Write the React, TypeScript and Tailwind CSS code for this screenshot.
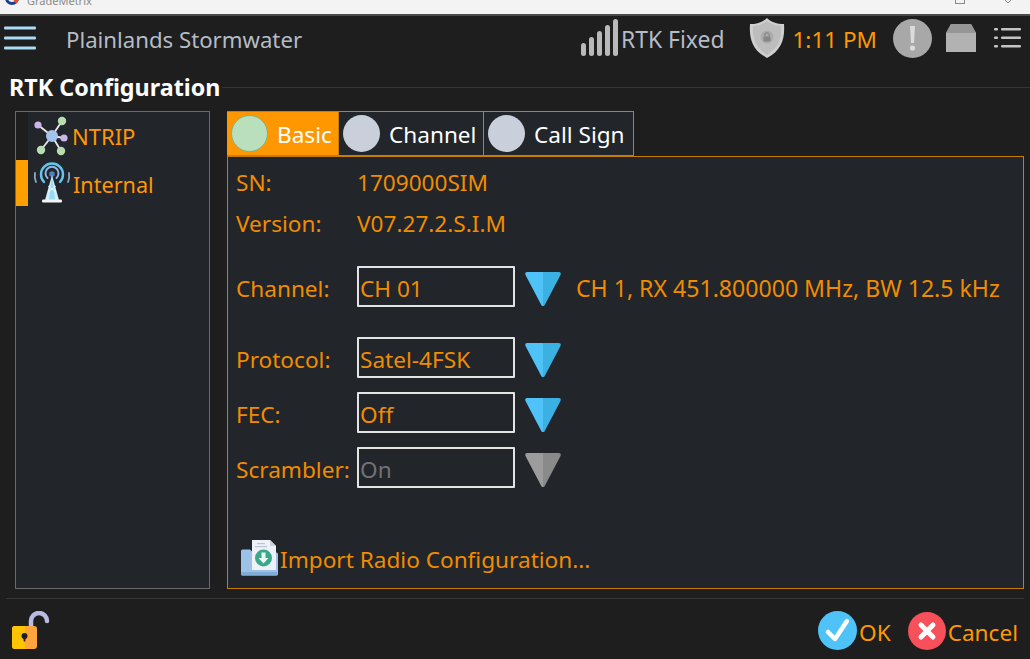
import { ReactNode } from 'react'

const FONT = "font-['Noto_Sans','Open_Sans',sans-serif]"

function MenuIcon() {
  return (
    <svg width="34" height="24" viewBox="0 0 34 24" className="shrink-0">
      <g fill="#a9dcf5">
        <rect x="1" y="0.5" width="32" height="3" rx="1" />
        <rect x="1" y="10.5" width="32" height="3" rx="1" />
        <rect x="1" y="20.5" width="32" height="3" rx="1" />
      </g>
    </svg>
  )
}

function SignalBars() {
  return (
    <svg width="38" height="38" viewBox="0 0 38 38" className="shrink-0">
      <g fill="#b9b9b9">
        <rect x="0" y="24" width="5" height="13" rx="2.5" />
        <rect x="8" y="18" width="5" height="19" rx="2.5" />
        <rect x="16" y="12" width="5" height="25" rx="2.5" />
        <rect x="24" y="6" width="5" height="31" rx="2.5" />
        <rect x="32" y="0" width="5" height="37" rx="2.5" />
      </g>
    </svg>
  )
}

function Shield() {
  return (
    <svg width="36" height="40" viewBox="0 0 36 40" className="shrink-0">
      <path d="M18 0 C22 4 28 6 35 6 C36 20 33 32 18 40 C3 32 0 20 1 6 C8 6 14 4 18 0Z" fill="#cfcfcf" />
      <path d="M18 3 C22 6 27 8 32 8 C33 20 30 30 18 37 C7 30 3 20 4 8 C9 8 14 6 18 3Z" fill="#bdbdbd" />
      <circle cx="18" cy="19" r="6.5" fill="#ababab" />
      <rect x="14.5" y="18.5" width="7" height="5" rx="1" fill="#858585" />
      <path d="M15.8 18.5v-1.500a2.200 2.200 0 0 1 4.400 0v1.500" fill="none" stroke="#858585" strokeWidth="1.100" />
    </svg>
  )
}

function AlertBadge() {
  return (
    <svg width="39" height="39" viewBox="0 0 39 39" className="shrink-0">
      <circle cx="19.5" cy="19.5" r="19.5" fill="#a8a8a8" />
      <path d="M17 7h5l-1 17h-3Z" fill="#dcdcdc" />
      <circle cx="19.5" cy="29" r="2.6" fill="#dcdcdc" />
    </svg>
  )
}

function BoxIcon() {
  return (
    <svg width="30" height="28" viewBox="0 0 30 28" className="shrink-0">
      <path d="M5 0H25L30 9V28H0V9Z" fill="#b2b2b2" />
      <path d="M5 0H25L30 9H0Z" fill="#969696" />
    </svg>
  )
}

function ListIcon() {
  return (
    <svg width="28" height="22" viewBox="0 0 28 22" className="shrink-0">
      <g fill="#c4c4c4">
        <rect x="0" y="1" width="4" height="2.5" rx="1" />
        <rect x="0" y="9.5" width="4" height="2.5" rx="1" />
        <rect x="0" y="18" width="4" height="2.5" rx="1" />
        <rect x="7" y="1" width="20" height="2.5" rx="1" />
        <rect x="7" y="9.5" width="20" height="2.5" rx="1" />
        <rect x="7" y="18" width="20" height="2.5" rx="1" />
      </g>
    </svg>
  )
}

function NetworkIcon() {
  return (
    <svg width="36" height="40" viewBox="0 0 36 40" className="shrink-0">
      <g stroke="#e8e8e8" strokeWidth="1.8">
        <line x1="19" y1="20" x2="5" y2="9" />
        <line x1="19" y1="20" x2="29" y2="5" />
        <line x1="19" y1="20" x2="31" y2="22" />
        <line x1="19" y1="20" x2="8" y2="34" />
        <line x1="19" y1="20" x2="28" y2="35" />
      </g>
      <circle cx="19" cy="20" r="6" fill="#a4c4ee" />
      <circle cx="5" cy="9" r="3.600" fill="#cdb4e6" />
      <circle cx="29" cy="5" r="4.200" fill="#b6dcb0" />
      <circle cx="31" cy="22" r="3.600" fill="#cdb4e6" />
      <circle cx="8" cy="34" r="4.200" fill="#b6dcb0" />
      <circle cx="28" cy="35" r="4.200" fill="#b6dcb0" />
    </svg>
  )
}

function TowerIcon() {
  return (
    <svg width="42" height="42" viewBox="0 0 42 42" className="shrink-0">
      <g fill="none" strokeLinecap="round">
        <path d="M13 20a11 11 0 1 1 16 0" stroke="#62c6ee" strokeWidth="2.400" />
        <path d="M16.500 16a6.500 6.500 0 1 1 9 0" stroke="#8fb6e6" strokeWidth="2" />
        <path d="M5 20a16 16 0 0 1 -1 -9M37 20a16 16 0 0 0 1 -9" stroke="#8fa8c8" strokeWidth="1.800" />
      </g>
      <circle cx="21" cy="12" r="2.800" fill="#4f7fc0" />
      <path d="M21 13L28 38H14Z" fill="#cdeefa" />
      <path d="M21 13L24 38H18Z" fill="#9adcf4" />
      <path d="M17 30L25 24M25 30L17 24" stroke="#ffffff" strokeWidth="0.800" />
      <rect x="11" y="37.500" width="20" height="3" rx="1" fill="#f4f4f4" />
    </svg>
  )
}

function ImportIcon() {
  return (
    <svg width="38" height="38" viewBox="0 0 38 38" className="shrink-0">
      <path d="M1 12a1.500 1.500 0 0 1 1.500-1.500H10l3 3h23.500a1.500 1.500 0 0 1 1.500 1.500V35a1.500 1.500 0 0 1-1.500 1.500H2.500A1.500 1.500 0 0 1 1 35Z" fill="#9cc2e8" />
      <path d="M12 1H30L36 7V31H12Z" fill="#eef1f7" />
      <path d="M30 1L36 7H30Z" fill="#c9d2e2" />
      <rect x="17" y="4" width="8" height="1.200" fill="#bcc5d6" />
      <rect x="15" y="7" width="12" height="1.200" fill="#bcc5d6" />
      <circle cx="23.500" cy="19" r="8.500" fill="#3aa98a" />
      <path d="M21.500 13.500h4v5.500h3l-5 5.500-5-5.500h3Z" fill="#eef8f4" />
      <path d="M1 33h36v2a1.500 1.500 0 0 1-1.500 1.500H2.500A1.500 1.500 0 0 1 1 35Z" fill="#82acd8" />
    </svg>
  )
}

function LockIcon() {
  return (
    <svg width="38" height="40" viewBox="0 0 38 40" className="shrink-0">
      <path d="M19 16V10a8 8 0 0 1 16 0" fill="none" stroke="#b9bce0" strokeWidth="4.500" strokeLinecap="round" />
      <rect x="0" y="15" width="25" height="23" rx="3" fill="#ffa53d" />
      <path d="M3 15h10v23H3a3 3 0 0 1-3-3V18a3 3 0 0 1 3-3Z" fill="#ffc400" />
      <circle cx="12.500" cy="25" r="3" fill="#1f1f1f" />
      <path d="M11.200 26h2.600l-.6 4.500h-1.400Z" fill="#1f1f1f" />
    </svg>
  )
}

function Triangle({ off }: { off?: boolean }) {
  return (
    <svg width="36" height="34" viewBox="0 0 36 34" className="shrink-0">
      <path d="M2 0H18V34C17 34 16.500 33.500 16 32.500L.5 3C-.2 1.500.5 0 2 0Z" fill={off ? '#9c9c9c' : '#4fc3f7'} />
      <path d="M34 0H18V34C19 34 19.500 33.500 20 32.500L35.500 3C36.200 1.500 35.500 0 34 0Z" fill={off ? '#8a8a8a' : '#3bb0e2'} />
    </svg>
  )
}

function TabDot({ active }: { active?: boolean }) {
  return (
    <span
      className={
        active
          ? 'h-[37px] w-[37px] shrink-0 rounded-full border border-[#7fb08a] bg-[#b9dfbd]'
          : 'h-[37px] w-[37px] shrink-0 rounded-full bg-[#c9d0dc]'
      }
    />
  )
}

function Tab({ label, active, width }: { label: string; active?: boolean; width: string }) {
  return (
    <div
      className={`flex h-[45px] items-center gap-[9px] border border-l-0 border-[#c77c0a] pl-[4px] ${width} ${
        active ? 'bg-[#ff9800]' : 'bg-[#22252a]'
      }`}
    >
      <TabDot active={active} />
      <span className="pt-[2px] text-[22.6px] text-white">{label}</span>
    </div>
  )
}

function Field({ label, children }: { label: string; children: ReactNode }) {
  return (
    <div className="flex items-center">
      <span className="w-[121px] shrink-0">{label}</span>
      {children}
    </div>
  )
}

function SelectRow({
  label,
  value,
  off,
  className,
  note,
}: {
  label: string
  value: string
  off?: boolean
  className: string
  note?: string
}) {
  return (
    <div className={`flex items-center ${className}`}>
      <span className="w-[121px] shrink-0 pt-[4px]">{label}</span>
      <div
        className={`flex h-[41px] w-[158px] shrink-0 items-center rounded-[1px] border-2 border-[#e4e4e4] pl-[1px] pt-[4px] ${
          off ? 'text-[#6f7276]' : ''
        }`}
      >
        {value}
      </div>
      <div className="ml-[10px] flex h-[41px] items-end pb-[1px]">
        <Triangle off={off} />
      </div>
      {note && <span className="ml-[15px] whitespace-nowrap pt-[4px] text-[23.1px]">{note}</span>}
    </div>
  )
}

export default function App() {
  return (
    <div className={`flex h-[659px] w-[1030px] flex-col overflow-hidden bg-[#1e1e1e] ${FONT}`}>
      {/* window title bar, cut by the top of the shot */}
      <div className="flex h-[16px] shrink-0 items-end justify-between overflow-hidden border-b-2 border-[#4a4a4a] bg-[#f3f3f3] pl-[5px] pr-[17px]">
        <div className="flex items-end gap-[8px] pb-[8px]">
          <svg width="14" height="8" viewBox="0 0 14 8" className="shrink-0">
            <path d="M0 0a7 7 0 0 0 14 0h-3a4 4 0 0 1-8 0Z" fill="#1c3f94" />
            <path d="M7 0h7a7 7 0 0 1-3 5.500Z" fill="#e8502a" />
          </svg>
          <span className="text-[11px] leading-[11px] text-[#8a8a8a]">GradeMetrix</span>
        </div>
        <div className="flex items-end gap-[38px] pb-[10px]">
          <span className="h-[4px] w-[10px] border-x border-b border-[#8a8a8a]" />
          <svg width="10" height="4" viewBox="0 0 10 4">
            <path d="M1 -1L5 3L9 -1" fill="none" stroke="#8a8a8a" />
          </svg>
        </div>
      </div>

      {/* top bar */}
      <header className="flex h-[44px] shrink-0 items-center pl-[3px] pr-[8px]">
        <MenuIcon />
        <span className="ml-[29px] pt-[3px] text-[22.2px] text-[#b4bcc6]">Plainlands Stormwater</span>
        <div className="ml-auto flex items-center">
          <SignalBars />
          <span className="ml-[2px] pt-[4px] text-[22.9px] text-[#b4bcc6]">RTK Fixed</span>
          <div className="ml-[25px]">
            <Shield />
          </div>
          <span className="ml-[7px] pt-[3px] text-[22.5px] text-[#ff9800]">1:11 PM</span>
          <div className="ml-[16px]">
            <AlertBadge />
          </div>
          <div className="ml-[14px]">
            <BoxIcon />
          </div>
          <div className="ml-[18px]">
            <ListIcon />
          </div>
        </div>
      </header>

      {/* heading with rule */}
      <div className="mt-[11px] flex h-[33px] shrink-0 items-center pl-[9px]">
        <h1 className="text-[23.3px] font-bold leading-[33px] text-white">RTK Configuration</h1>
        <span className="ml-[2px] h-px flex-1 bg-[#333539]" />
      </div>

      <main className="mt-[7px] flex h-[478px] shrink-0 pl-[15px] pr-[6px]">
        {/* left nav */}
        <aside className="flex w-[195px] shrink-0 flex-col border border-[#67696c] bg-[#22252a] text-[#ff9800]">
          <div className="flex h-[48px] items-center bg-[#1e1e1e]">
            <div className="ml-[12px] flex h-full w-full items-center bg-[#22252a] pl-[5px]">
              <NetworkIcon />
              <span className="ml-[3px] text-[22px]">NTRIP</span>
            </div>
          </div>
          <div className="flex h-[46px] items-center">
            <span className="h-full w-[12px] shrink-0 bg-[#ffa000]" />
            <div className="ml-[3px]">
              <TowerIcon />
            </div>
            <span className="pt-[4px] text-[21.6px]">Internal</span>
          </div>
        </aside>

        {/* tabbed panel */}
        <section className="ml-[17px] flex min-w-0 flex-1 flex-col">
          <div className="flex shrink-0">
            <Tab label="Basic" active width="w-[112px]" />
            <Tab label="Channel" width="w-[145px]" />
            <Tab label="Call Sign" width="w-[150px]" />
          </div>
          <div className="flex flex-1 flex-col border border-[#c77c0a] bg-[#22252a] pl-[8px] pt-[6px] text-[22.6px] text-[#f08c00]">
            <div className="flex h-[40px] items-center">
              <Field label="SN:">
                <span>1709000SIM</span>
              </Field>
            </div>
            <div className="flex h-[40px] items-center pt-[2px]">
              <Field label="Version:">
                <span>V07.27.2.S.I.M</span>
              </Field>
            </div>
            <SelectRow
              label="Channel:"
              value="CH 01"
              className="mt-[23px]"
              note="CH 1, RX 451.800000 MHz, BW 12.5 kHz"
            />
            <SelectRow label="Protocol:" value="Satel-4FSK" className="mt-[30px]" />
            <SelectRow label="FEC:" value="Off" className="mt-[14px]" />
            <SelectRow label="Scrambler:" value="On" off className="mt-[14px]" />
            <div className="mt-[51px] flex items-center pl-[4px]">
              <ImportIcon />
              <span className="ml-[2px] pt-[4px]">Import Radio Configuration...</span>
            </div>
          </div>
        </section>
      </main>

      {/* footer */}
      <div className="mx-[6px] mt-[9px] h-px shrink-0 bg-[#333539]" />
      <footer className="flex flex-1 items-start pl-[12px] pr-[12px] pt-[12px] text-[22.6px] text-[#ff9800]">
        <LockIcon />
        <div className="ml-auto flex items-center">
          <svg width="39" height="39" viewBox="0 0 39 39" className="shrink-0">
            <circle cx="19.500" cy="19.500" r="19.500" fill="#4fc3f7" />
            <path d="M10 21l7 7L29 10" fill="none" stroke="#ffffff" strokeWidth="4.500" strokeLinecap="round" strokeLinejoin="round" />
          </svg>
          <span className="ml-[2px] pt-[4px]">OK</span>
          <svg width="38" height="38" viewBox="0 0 38 38" className="ml-[17px] shrink-0">
            <circle cx="19" cy="19" r="19" fill="#f7505a" />
            <path d="M13 13L25 25M25 13L13 25" stroke="#ffffff" strokeWidth="5" strokeLinecap="round" />
          </svg>
          <span className="ml-[2px] pt-[4px]">Cancel</span>
        </div>
      </footer>
    </div>
  )
}
